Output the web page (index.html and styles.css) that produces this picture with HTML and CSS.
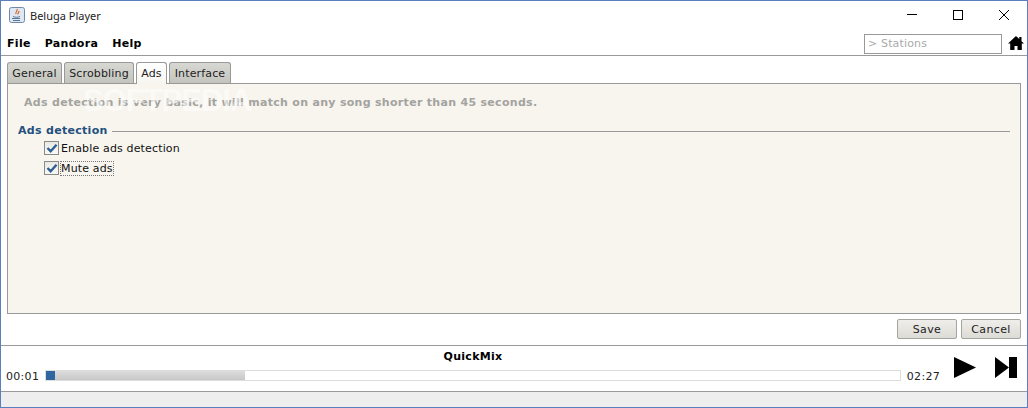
FILE: index.html
```html
<!DOCTYPE html>
<html lang="en">
<head>
  <meta charset="UTF-8"/>
  <title>Beluga Player</title>
  <link rel="stylesheet" href="styles.css">
</head>
<body>

<div class="window">
  <div class="titlebar">
    <svg class="app-icon" width="16" height="16" viewBox="0 0 16 16">
      <rect x="0.5" y="0.5" width="15" height="15" rx="2" fill="#dfe8f2" stroke="#6f8aa8"/>
      <path d="M3 11.500h8M4 13.500h7" stroke="#5b7896" fill="none"/>
      <path d="M4 9.500c2 1 5 1 7 0" stroke="#5b7896" fill="none"/>
      <path d="M8 2c1 2-2 3-1 5M10 4c0 1.500-1.500 2-1 3.500" stroke="#d9662a" stroke-width="1.200" fill="none"/>
    </svg>
    <span class="app-title">Beluga Player</span>
    <div class="window-controls">
      <svg width="46" height="12" viewBox="0 0 46 12"><path d="M18 5.500h10" stroke="#000" fill="none"/></svg>
      <svg width="46" height="12" viewBox="0 0 46 12"><rect x="18.500" y="1.500" width="9" height="9" stroke="#000" fill="none"/></svg>
      <svg width="46" height="12" viewBox="0 0 46 12"><path d="M18 1l10 10M28 1l-10 10" stroke="#000" fill="none"/></svg>
    </div>
  </div>

  <div class="menubar">
    <span class="menu-item">File</span>
    <span class="menu-item">Pandora</span>
    <span class="menu-item">Help</span>
    <div class="station-box">&gt; Stations</div>
    <svg class="home-icon" width="16" height="14" viewBox="0 0 16 14">
      <path d="M8 0L0 7.500h2.200V14h4.300V10h3v4h4.300V7.500H16L13.500 5.200V1h-2.200v2.100z" fill="#000"/>
    </svg>
  </div>

  <div class="settings">
    <div class="tabs">
      <div class="tab">General</div>
      <div class="tab">Scrobbling</div>
      <div class="tab active">Ads</div>
      <div class="tab">Interface</div>
    </div>
    <div class="panel">
      <p class="hint">Ads detection is very basic, it will match on any song shorter than 45 seconds.</p>
      <span class="watermark">SOFTPEDIA</span>
      <div class="group-title">
        <span>Ads detection</span>
        <div class="group-line"></div>
      </div>
      <div class="check-row">
        <span class="check"><svg width="12" height="10" viewBox="0 0 13 11"><path d="M1.500 5.500l3.500 3.500 6.500-7" stroke="#2f5f92" stroke-width="2.600" fill="none"/></svg></span>
        <span class="check-label">Enable ads detection</span>
      </div>
      <div class="check-row">
        <span class="check"><svg width="12" height="10" viewBox="0 0 13 11"><path d="M1.500 5.500l3.500 3.500 6.500-7" stroke="#2f5f92" stroke-width="2.600" fill="none"/></svg></span>
        <span class="check-label focused">Mute ads</span>
      </div>
    </div>
    <div class="actions">
      <button class="btn">Save</button>
      <button class="btn">Cancel</button>
    </div>
  </div>

  <div class="player">
    <div class="track-info">
      <div class="song-title">QuickMix</div>
      <div class="progress-row">
        <span class="time">00:01</span>
        <div class="progress">
          <div class="progress-buffer"></div>
          <div class="progress-knob"></div>
        </div>
        <span class="time">02:27</span>
      </div>
    </div>
    <div class="transport">
      <svg width="22" height="21" viewBox="0 0 22 21"><path d="M0 0l22 10.500L0 21z" fill="#000"/></svg>
      <svg width="22" height="21" viewBox="0 0 22 21"><path d="M0 0l14 10.500L0 21z" fill="#000"/><rect x="14" y="0" width="8" height="21" fill="#000"/></svg>
    </div>
  </div>

  <div class="statusbar"></div>
</div>

</body>
</html>
```

FILE: styles.css
```css
html, body {
  margin: 0;
  padding: 0;
}

body {
  font-family: "DejaVu Sans", sans-serif;
  font-size: 11px;
  letter-spacing: 0.15px;
  background-color: white;
  color: #111;
}

.window {
  width: 1028px;
  height: 408px;
  box-sizing: border-box;
  border: 1px solid #5b7fbd;
  display: flex;
  flex-direction: column;
  overflow: hidden;
}

.titlebar {
  height: 30px;
  box-sizing: border-box;
  display: flex;
  align-items: center;
  padding: 0 0 2px 8px;
  flex-shrink: 0;
}

.app-icon {
  margin-right: 5px;
}

.app-title {
  font-family: "Noto Sans", sans-serif;
  font-size: 11px;
  letter-spacing: 0;
  color: #222;
}

.window-controls {
  margin-left: auto;
  display: flex;
}

.menubar {
  height: 24px;
  display: flex;
  align-items: center;
  padding: 0 3px 0 6px;
  border-bottom: 1px solid #999;
  flex-shrink: 0;
}

.menu-item {
  font-weight: bold;
  letter-spacing: 0.3px;
  margin-right: 14px;
  color: #000;
}

.station-box {
  margin-left: auto;
  margin-top: 1px;
  width: 133px;
  height: 18px;
  line-height: 18px;
  border: 1px solid #999;
  padding-left: 3px;
  color: #aaa;
  margin-right: 6px;
}

.settings {
  height: 289px;
  flex-shrink: 0;
  padding: 6px 6px 0 6px;
  box-sizing: border-box;
  display: flex;
  flex-direction: column;
}

.tabs {
  display: grid;
  grid-template-columns: 55px 70px 31px 62px;
  gap: 2px;
  height: 21px;
  flex-shrink: 0;
}

.tab {
  height: 21px;
  line-height: 21px;
  text-align: center;
  box-sizing: border-box;
  border: 1px solid #999;
  border-bottom: none;
  border-radius: 3px 3px 0 0;
  background: linear-gradient(#d8d8d3, #c4c4be);
  color: #222;
}

.tab.active {
  background: linear-gradient(#fff, #f7f5ee);
  position: relative;
  z-index: 1;
  height: 22px;
}

.panel {
  height: 231px;
  box-sizing: border-box;
  flex-shrink: 0;
  position: relative;
  border: 1px solid #999;
  background-color: #f7f5ee;
  padding: 12px 10px 0 10px;
}

.watermark {
  position: absolute;
  left: 75px;
  top: -1px;
  font-family: "Liberation Sans", sans-serif;
  font-size: 31px;
  font-weight: bold;
  letter-spacing: -1px;
  color: rgba(255, 255, 255, 0.55);
}

.hint {
  margin: 0;
  padding-left: 6px;
  font-weight: bold;
  letter-spacing: 0.3px;
  color: #a3a3a0;
  line-height: 13px;
}

.group-title {
  margin-top: 15px;
  display: flex;
  align-items: center;
  font-weight: bold;
  letter-spacing: 0.3px;
  color: #24507e;
  line-height: 14px;
}

.group-line {
  flex: 1;
  height: 1px;
  background-color: #999;
  margin-left: 4px;
}

.check-row {
  margin-left: 26px;
  height: 20px;
  display: flex;
  align-items: center;
}

.check {
  width: 13px;
  height: 12px;
  border: 1px solid #8a8a8a;
  background: linear-gradient(#e8e8e4, #f8f8f5);
  margin-right: 1px;
  display: flex;
  align-items: center;
  justify-content: center;
}

.check-label {
  border: 1px dotted transparent;
  padding-top: 1px;
  line-height: 12px;
  color: #111;
}

.check-label.focused {
  border-color: #777;
}

.actions {
  flex: 1;
  padding-top: 5px;
  display: flex;
  justify-content: flex-end;
  align-items: flex-start;
  gap: 4px;
}

.btn {
  font-family: inherit;
  font-size: 11px;
  letter-spacing: 0.4px;
  height: 20px;
  padding: 0;
  width: 60px;
  border: 1px solid #a5a5a0;
  border-radius: 2px;
  background: linear-gradient(#efeeea, #dcdbd5);
  color: #222;
}

.player {
  height: 47px;
  box-sizing: border-box;
  flex-shrink: 0;
  border-top: 1px solid #999;
  border-bottom: 1px solid #999;
  display: flex;
}

.track-info {
  flex: 1;
  padding: 4px 0 0 5px;
  min-width: 0;
}

.song-title {
  text-align: center;
  font-weight: bold;
  letter-spacing: 0.3px;
  line-height: 14px;
  color: #000;
  margin-bottom: 6px;
}

.progress-row {
  display: flex;
  align-items: flex-end;
  gap: 6px;
}

.time {
  line-height: 12px;
  letter-spacing: 0.3px;
  color: #222;
}

.progress {
  flex: 1;
  height: 9px;
  position: relative;
  border: 1px solid #ddd;
  margin-bottom: 2px;
}

.progress-buffer {
  width: 199px;
  height: 100%;
  background: linear-gradient(#dcdcdc, #c8c8c8);
}

.progress-knob {
  position: absolute;
  left: 0;
  top: 0;
  width: 9px;
  height: 9px;
  background-color: #2f669f;
}

.transport {
  box-sizing: border-box;
  width: 87px;
  padding: 11px 10px 0 14px;
  display: flex;
  justify-content: space-between;
  gap: 19px;
}

.statusbar {
  flex: 1;
  background-color: #eeeeee;
}
```
